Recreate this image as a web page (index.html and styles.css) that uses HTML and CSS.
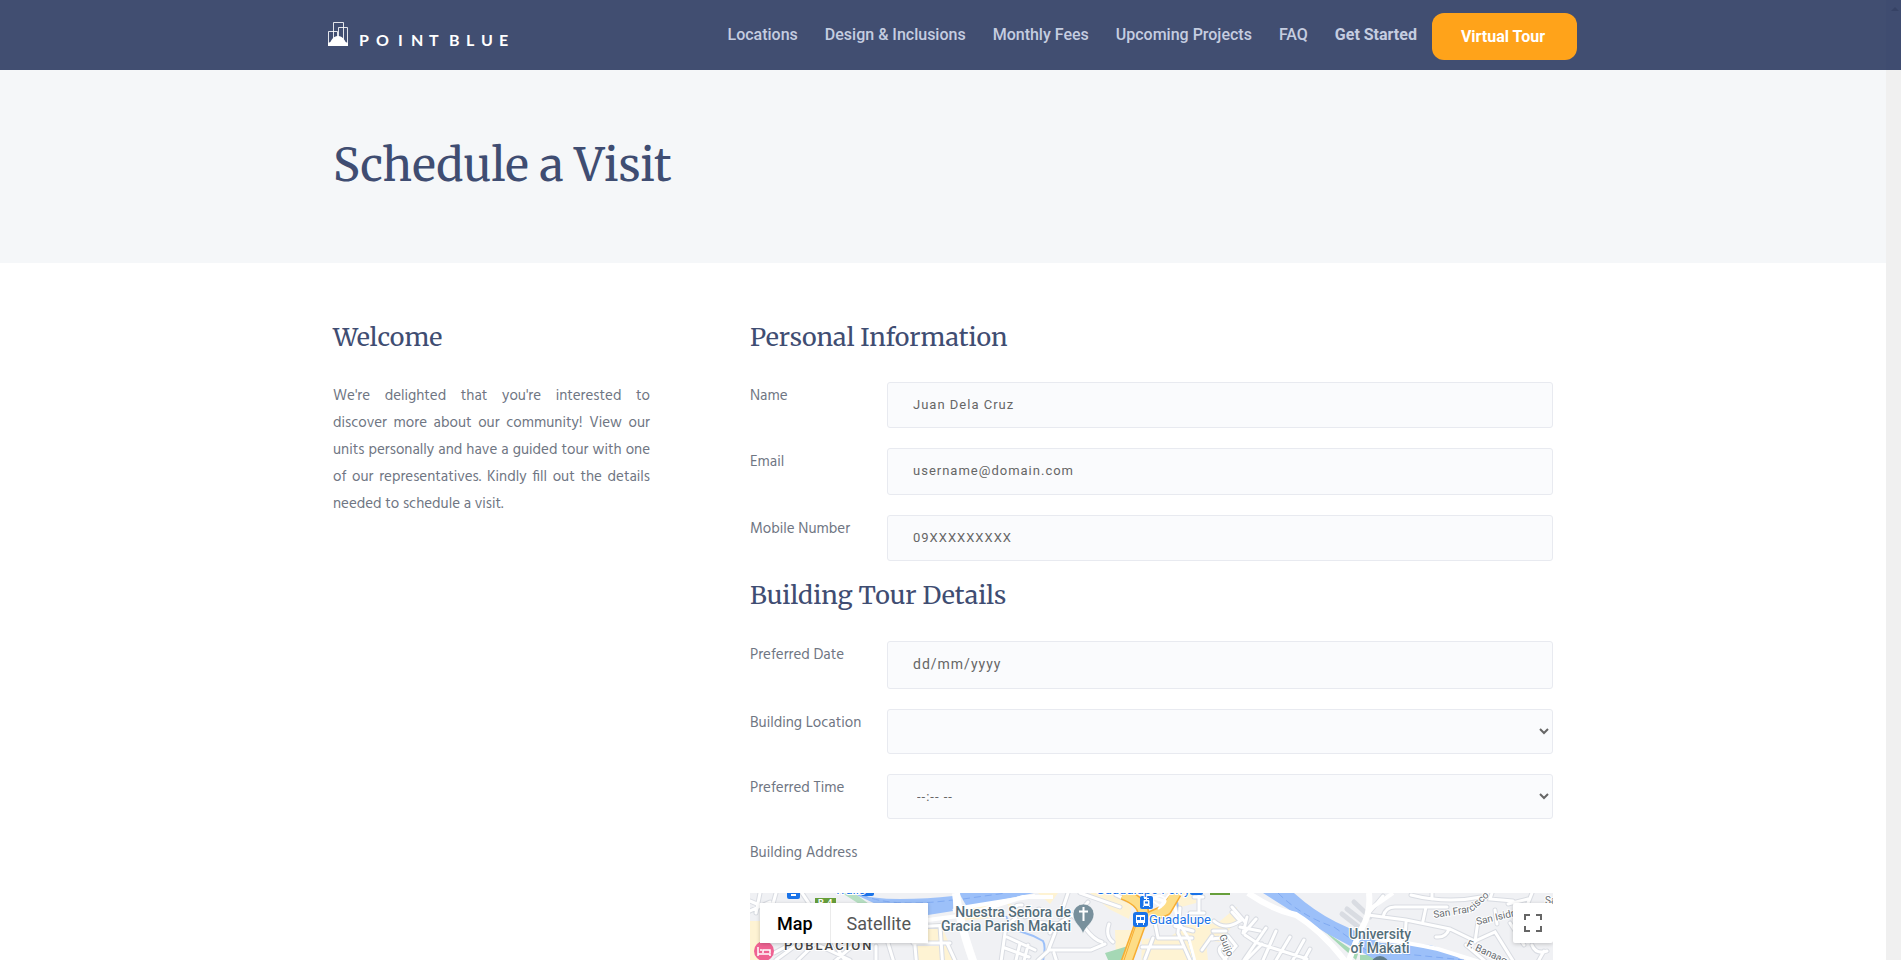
FILE: index.html
```html
<!DOCTYPE html>
<html lang="en">
<head>
<meta charset="utf-8">
<meta name="viewport" content="width=device-width, initial-scale=1">
<title>Schedule a Visit</title>
<link rel="stylesheet" href="styles.css">
</head>
<body>
<header class="site-header">
  <div class="header-inner">
    <a class="logo" href="#" aria-label="Point Blue">
      <svg width="190" height="28" viewBox="0 0 190 28" aria-hidden="true">
        <path d="M.5 24V10.500h9V18M5.500 18V1.500h10V18M10.500 18V6.500h9V24" fill="none" stroke="#fff" stroke-opacity=".85"/>
        <path d="M0 25v-3q3-.5 3.500-3 2.500-4 6.500-4t6.500 4q.5 2.500 3.500 3v3z" fill="#fff"/>
        <g class="wordmark"><text x="31 48 70 83 101" y="25">POINT</text><text x="121 138 153 171" y="25">BLUE</text></g>
      </svg>
    </a>
    <nav class="nav">
      <a href="#">Locations</a>
      <a href="#">Design &amp; Inclusions</a>
      <a href="#">Monthly Fees</a>
      <a href="#">Upcoming Projects</a>
      <a href="#">FAQ</a>
      <a class="strong" href="#">Get Started</a>
    </nav>
    <a class="tour" href="#">Virtual Tour</a>
  </div>
  <div class="bar-top"><svg width="8" height="5" viewBox="0 0 8 5" aria-hidden="true"><path d="M0 4 4 0l4 4z" fill="#364265"/></svg></div>
</header>
<div class="viewport">
  <main class="page">
    <section class="hero"><div class="container"><h1>Schedule a Visit</h1></div></section>
    <div class="container columns">
      <section class="welcome">
        <h2>Welcome</h2>
        <p>We're delighted that you're interested to discover more about our community! View our units personally and have a guided tour with one of our representatives. Kindly fill out the details needed to schedule a visit.</p>
      </section>
      <form class="form">
        <h2>Personal Information</h2>
        <div class="row"><label for="name">Name</label><input id="name" type="text" placeholder="Juan Dela Cruz"></div>
        <div class="row"><label for="email">Email</label><input id="email" type="email" placeholder="username@domain.com"></div>
        <div class="row"><label for="mobile">Mobile Number</label><input id="mobile" type="tel" placeholder="09XXXXXXXXX"></div>
        <h2>Building Tour Details</h2>
        <div class="row"><label for="date">Preferred Date</label><input class="date" id="date" type="text" placeholder="dd/mm/yyyy"></div>
        <div class="row"><label for="location">Building Location</label><select id="location"><option></option></select></div>
        <div class="row"><label for="time">Preferred Time</label><select id="time"><option>--:-- --</option></select></div>
        <div class="address">Building Address</div>
        <div class="map">
          <svg class="map-art" viewBox="0 0 803 76" preserveAspectRatio="xMinYMin slice" role="img" aria-label="Map of Makati">
            <rect width="803" height="76" fill="#f0f1f4"/>
            <g fill="#fef3d3">
              <path d="M0 28h16v48H0zM164 33l26-3 9 20h-30zM167 53h34l4 23h-38zM205 17l35-6 8 13-38 4zM257 10l12 4-8 6zM288 0h20l-8 11zM340 0h45l-6 26-20-10zM365 37h24l-7 30h-16zM392 46l28-2 16-12 18 0 5 44h-68zM417 0h30l-1 10-22 6zM445 35l24-6 18-15-1 14-16 21-20-3z"/>
            </g>
            <path d="M355 60l23-7-4 23h-12zM573 37l35 24-2 6zM610 62l35 0 15 5h-50z" fill="#a5d8b5"/>
            <path d="M92 0h12l22 16-12-2z" fill="#b7dfc2"/>
            <g fill="#9cc0f9">
              <path d="M102 0q20 6 48 6t53-3v15l-25 4q-28-1-50-10zM209 0h75l-42 9-25 5z"/>
              <path d="M513 0h31q20 18 42 29l45 21 49 2q20 5 45 24h-82L576 40z"/>
            </g>
            <g fill="none" stroke="#80aaf2" stroke-dasharray="7 4"><path d="M112 2q30 13 91 5M213 6l43-6M528 0q23 23 56 34l32 23 98 10"/></g>
            <path d="M256 23q5 13 16 16t21 9q4 6-2 28M427 9l4 20 9 22 6 25" fill="none" stroke="#9cc0f9" stroke-width="2"/>
            <!-- minor streets: grey casing below, white surface above -->
            <g fill="none" stroke="#d9dce2" stroke-width="5" stroke-linecap="round">
              <use href="#lanes"/>
              <path d="M604 9l16 15M597 16l18 14M592 21l18 14"/>
            </g>
            <g fill="none" stroke="#fff" stroke-width="3" stroke-linecap="round"><use href="#lanes"/></g>
            <defs>
              <g id="lanes">
                <path d="M0 8l28 12M0 18l20-9M10 0l-4 20M26 0l-5 18M52 0l8 12M24 60l22-12M26 67l30-22M48 67l23-22M70 53l30 14M84 50l16 26M106 50l-28 24M126 53v23M138 50l8 26M163 30l4 46M163 34l36-2M163 50h37M190 33l3 43M197 50l12 26M250 76l6-43 10-8M257 44l28 13M255 55l24 9M270 50l-6 26M278 52l-6 24M265 18q-1-7 7-6M275 24l14-8M284 29l24 2 14-9 13 13q9 12 17 14M300 40l5-9M305 40l-7 18-10 9M299 57h42l14-6M304 60l5 16M359 31q-4 12 4 18M318 0l-8 24M330 0l40 14M338 9l-12 14M377 7l-11-5"/>
                <path d="M392 54h40M395 66l8-21M408 45l-4-20M408 45h34M430 15l-2 25 12 27M425 33l18 5M444 4h9M449 0v18M440 20h14M452 57l10-14M463 38h13M482 14l13 15M497 24l-4 16M494 40l12-14M462 46q16-3 10 7-7 4 4 14M478 43l8 10-12 14M495 42l12 8 50 16M512 51l-16 16M516 35l-22 32M526 38l-16 36M540 44l-18 30M554 47l-15 27M560 56l-10 18M464 28q11 10 26 0l-8-9M490 34l20 4"/>
                <path d="M618 22l38 5 44 9M633 24q2-10 12-10h52M676 14l-3 14M656 29l-1 17M699 36q-3 9-13 8M700 36l25 12 20-9 20 32M728 28l-3 21M745 17l2 14M661 2q36 9 70 2M682 0v6M742 0l-2 6 23 2M758 11l20-5M716 52l26 22M760 30l14 22M782 52q4 10 15 6M794 58l-9 16M782 0l-4 10M633 3l-15 18"/>
              </g>
            </defs>
            <!-- main roads -->
            <g fill="none" stroke="#fff">
              <path d="M206 0q3 30 20 76" stroke-width="8"/>
              <path d="M203 18l14-4 68-11M178 27l38-5 57-18h30" stroke-width="4"/>
              <path d="M498 0q25 17 48 22 28 17 55 54" stroke-width="6"/>
              <path d="M619 0q2 20-7 35-8 17-16 41" stroke-width="6"/>
              <path d="M628 46q27 3 60 10l45 14M643 0l-23 16" stroke-width="4"/>
              <path d="M421 0l8 30 10 16 8 30M389 0l28 9" stroke-width="3"/>
            </g>
            <g fill="none" stroke-linejoin="round">
              <path d="M373 1q25 10 19 25l-18 50M398 25l18-8 10-17" stroke="#f7ad32" stroke-width="12"/>
              <path d="M373 1q25 10 19 25l-18 50M398 25l18-8 10-17" stroke="#fddd87" stroke-width="9"/>
              <path d="M390 20l-19 56" stroke="#f7ad32"/>
              <path d="M401 10q5-10 12-6t-5 12M398 5l12 8 10-13" stroke="#fff" stroke-width="2"/>
            </g>
            <path d="M65 5h21v7H65zM460 0h20v2h-20z" fill="#679f3b"/>
            <text x="68" y="13" class="badge-text">R-4</text>
            <g class="transit">
              <rect x="37" y="-8" width="13" height="14" rx="2"/><rect x="111" y="-9" width="13" height="12" rx="2"/><rect x="440" y="-10" width="13" height="12" rx="2"/>
              <rect x="390" y="3" width="13" height="13" rx="2"/><rect x="383" y="19" width="15" height="15" rx="3"/>
              <path d="M41 1h5v2h-5z" fill="#fff"/>
              <path d="M394 5.500h5M396.500 5.500v2M393 14l1.500-2M400 14l-1.500-2" stroke="#fff"/><rect x="393.500" y="7" width="6" height="6" rx="1" fill="#fff"/><path d="M395 8.500h3v2h-3z"/>
              <path d="M386 22h9v8h-1v2h-1v-2h-5v2h-1v-2h-1z" fill="#fff"/><path d="M387 24h3v3h-3zM391 24h3v3h-3z"/>
            </g>
            <g class="label blue"><text x="84" y="1">Trails</text><text x="346" y="1">Guadalupe Ferry</text><text x="399" y="31">Guadalupe</text></g>
            <g class="label"><text x="321" y="24" text-anchor="end">Nuestra Señora de</text><text x="321" y="38" text-anchor="end">Gracia Parish Makati</text><text x="630" y="46" text-anchor="middle">University</text><text x="630" y="60" text-anchor="middle">of Makati</text></g>
            <text x="34" y="57" class="district">POBLACION</text>
            <g class="road-label"><text transform="translate(684 25) rotate(-9)">San Fran</text><text transform="translate(722 19) rotate(-43)">cisco</text><text transform="translate(727 32) rotate(-13)">San Isidro</text><text transform="translate(716 53) rotate(25)">F. Banaag</text><text transform="translate(469 43) rotate(68)">Guijo</text><text x="795" y="11">Sampa</text></g>
            <path d="M333 41c-2-8-10-11-10-20a10.500 10 0 0 1 21 0c0 9-9 12-11 20z" fill="#78909c" stroke="#fff" stroke-width=".6"/><path d="M333.500 14v14M329 18.500h9" stroke="#fff" stroke-width="2"/>
            <circle cx="14" cy="58" r="10" fill="#ef6292"/><path d="M8 54v9M8 61h12v2M20 60v-3h-7v3M10 57h2" fill="none" stroke="#fff" stroke-width="1.500"/>
            <circle cx="630" cy="72" r="9" fill="#607d8b"/>
          </svg>
          <div class="map-types"><button class="active" type="button">Map</button><button type="button">Satellite</button></div>
          <button class="fullscreen" type="button" aria-label="Toggle fullscreen"><svg width="18" height="18" viewBox="0 0 18 18"><path d="M1 6V1h5M12 1h5v5M17 12v5h-5M6 17H1v-5" fill="none" stroke="#666" stroke-width="2"/></svg></button>
        </div>
      </form>
    </div>
  </main>
  <div class="bar" aria-hidden="true"></div>
</div>
</body>
</html>
```
FILE: styles.css
```css
* { box-sizing: border-box; }
body {
  margin: 0;
  height: 100vh;
  display: flex;
  flex-direction: column;
  overflow: hidden;
  background: #fff;
  color: #6f7683;
  font-family: Hind, "Noto Sans", sans-serif;
  font-size: 15px;
  line-height: 27px;
}
a { text-decoration: none; }
h1, h2 {
  margin: 0;
  color: #3f4d72;
  font-family: Merriweather, "DejaVu Serif Condensed", "DejaVu Serif", serif;
  font-weight: 400;
}

.site-header {
  display: grid;
  grid-template-columns: 1fr 15px;
  flex: none;
  height: 70px;
  background: #414e71;
}
.bar-top { background: #3f4c70; padding: 7px 0 0 5px; line-height: 0; }
.header-inner {
  display: flex;
  align-items: center;
  width: 100%;
  max-width: 1268px;
  margin: 0 auto;
  padding-left: 19px;
}
.logo { line-height: 0; margin-right: auto; }
.wordmark { fill: #fff; font: 700 16px Lato, sans-serif; }
.nav { display: flex; gap: 27px; margin-right: 15px; }
.nav a, .tour { font: 500 16px/24px Roboto, sans-serif; color: #c5cde0; white-space: nowrap; }
.nav .strong { font-weight: 700; }
.tour {
  margin-top: 3px;
  padding: 12px 32px 11px 29px;
  border-radius: 12px;
  background: #ffa31a;
  color: #fff;
  font-weight: 700;
}

.viewport { display: grid; grid-template-columns: 1fr 15px; flex: 1; min-height: 0; }
.page { display: flex; flex-direction: column; min-width: 0; min-height: 0; }
.bar { background: #f0f0f0; }
.container { width: 100%; max-width: 1250px; margin: 0 auto; padding: 0 15px; }
.hero { background: #f5f7f9; padding: 62px 0 65px; }
h1 { font-size: 45px; line-height: 66px; }
h2 { font-size: 25px; line-height: 40px; }

.columns {
  display: grid;
  grid-template-columns: 317px 1fr;
  gap: 100px;
  flex: 1;
  min-height: 0;
  padding-top: 54px;
}
.welcome p { margin: 26px 0 0; text-align: justify; }
.form { display: flex; flex-direction: column; gap: 20px; min-height: 0; }
.form h2 { margin-bottom: 5px; }
.form .row + h2 { margin: -6px 0 6px; }
.row { display: grid; grid-template-columns: 137px 1fr; }
.row label, .address { padding-top: 1px; }
.row input, .row select {
  width: 100%;
  height: 46px;
  padding: 0 25px 2px;
  border: 1px solid #e8eaf0;
  border-radius: 3px;
  background-color: #fafbfd;
  color: #666;
  font: 13px Roboto, sans-serif;
  letter-spacing: 1px;
}
.row input::placeholder { color: #666; opacity: 1; }
.row input[type="email"] { height: 47px; }
.row .date { height: 48px; font-size: 14px; }
.row select { height: 45px; padding: 0 0 0 25px; }
.map { position: relative; flex: 1; min-height: 67px; overflow: hidden; margin-top: 6px; }
.map-art { display: block; width: 100%; height: 100%; }
.label, .road-label, .district {
  font-family: Roboto, sans-serif;
  fill: #546e7a;
  stroke: #fff;
  stroke-width: 2px;
  paint-order: stroke;
}
.label { font-size: 14px; font-weight: 500; }
.blue { fill: #1a73e8; font-size: 13px; font-weight: 400; }
.road-label { font-size: 10px; fill: #666b70; }
.district { font-size: 13px; font-weight: 500; fill: #444; letter-spacing: 2px; }
.badge-text { font: 700 9px Roboto, sans-serif; fill: #fff; }
.transit { fill: #1a73e8; }
.map-types {
  position: absolute;
  top: 10px;
  left: 10px;
  display: flex;
  box-shadow: 0 1px 4px rgba(0, 0, 0, .2);
}
.map button { height: 40px; border: 0; background: #fff; color: #565656; font: 18px Roboto, sans-serif; cursor: pointer; }
.map-types button { padding: 0 17px; }
.map-types button + button { box-shadow: inset 1px 0 #ebebeb; }
.map-types .active { color: #000; font-weight: 500; }
.map .fullscreen {
  position: absolute;
  top: 10px;
  right: 0;
  display: grid;
  place-items: center;
  width: 40px;
  padding: 0;
  border-radius: 2px;
  box-shadow: 0 1px 4px rgba(0, 0, 0, .2);
}
```
